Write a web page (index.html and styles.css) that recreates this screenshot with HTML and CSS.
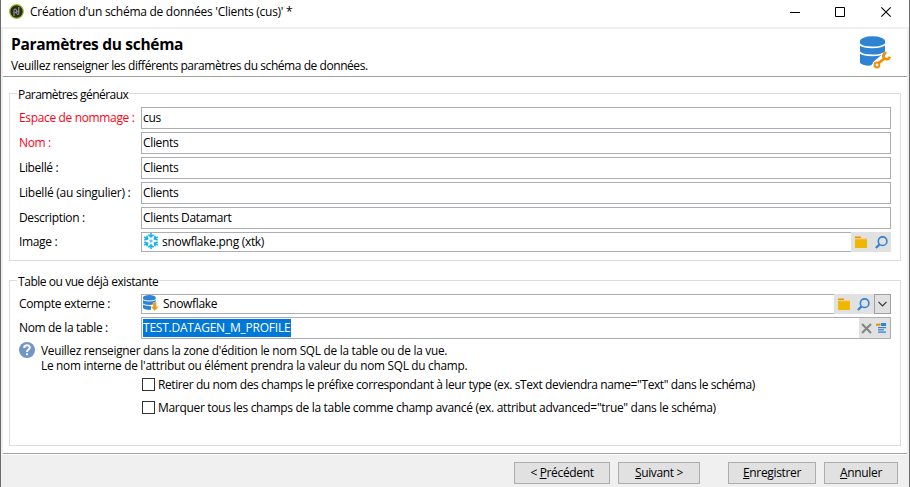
FILE: index.html
```html
<!DOCTYPE html>
<html lang="fr">
<head>
<meta charset="utf-8">
<title>Création d'un schéma de données</title>
<link rel="stylesheet" href="styles.css">
</head>
<body>
<svg class="defs" width="0" height="0">
  <symbol id="folder" viewBox="0 0 12 12"><path d="M0 .5h6v2H0z" fill="#f29100"/><path d="M0 2h12v1H0z" fill="#f7cf8a"/><path d="M0 3.2h12V12H0z" fill="#efb700"/></symbol>
  <symbol id="lens" viewBox="0 0 13 13"><circle cx="7.600" cy="5.200" r="4.300" fill="none" stroke="#2f83d3" stroke-width="1.600"/><path d="M4.700 8.300L.9 12" stroke="#2f83d3" stroke-width="2.200"/></symbol>
</svg>
<div class="window">
  <header class="titlebar">
    <svg class="app-icon" width="15" height="15" viewBox="0 0 15 15"><circle cx="7.5" cy="7.5" r="6.8" fill="#292b20" stroke="#a3bd2c" stroke-width="1.2"/><path d="M5 12V6.300q0-1.300 1.200-1.300t1.200 1.300v1.200q0 1.300-1.600 1.300M9.800 3v6.500q0 1-1 1t-1-1V8q0-1 2-1" fill="none" stroke="#aaa99a" stroke-width="1"/></svg>
    <span class="caption">Création d'un schéma de données 'Clients (cus)' *</span>
    <svg class="controls" width="102" height="12" viewBox="0 0 102 12" fill="none" stroke="#000"><path d="M0 6.500h10M45.500 1.500h9v9h-9z"/><path d="M91.300 1.300l9.400 9.400M100.700 1.300l-9.400 9.400" stroke-width="1.1"/></svg>
  </header>
  <main class="page">
    <section class="heading">
      <div>
        <h1>Paramètres du schéma</h1>
        <p>Veuillez renseigner les différents paramètres du schéma de données.</p>
      </div>
      <svg width="31" height="33" viewBox="0 0 31 33"><path d="M0 4.500V27c2 2 7 3 11 2.500L14 26l6-5 5-1V4.500z" fill="#2f83d3"/><ellipse cx="12.500" cy="5" rx="12.500" ry="4.700" fill="#2f83d3"/><path d="M-.5 8c3 4.500 22 4.500 26 0M-.5 16c3 4.500 22 4.500 26 0" fill="none" stroke="#fff" stroke-width="1.700"/><path d="M15.500 30l10-8.500" stroke="#fff" stroke-width="9"/><circle cx="17" cy="29" r="2.400" fill="none" stroke="#ef9000" stroke-width="2"/><path d="M18.500 27.200l6-4.700" stroke="#ef9000" stroke-width="2.800"/><path d="M26.500 16.800c-3 .4-4 3-2.500 5s4.500 2.200 6-1" fill="none" stroke="#ef9000" stroke-width="2.600"/></svg>
    </section>
    <section class="group general">
      <h2>Paramètres généraux</h2>
      <div class="row"><label class="required">Espace de nommage :</label><div class="field">cus</div></div>
      <div class="row"><label class="required">Nom :</label><div class="field">Clients</div></div>
      <div class="row"><label>Libellé :</label><div class="field">Clients</div></div>
      <div class="row"><label class="singular">Libellé (au singulier) :</label><div class="field">Clients</div></div>
      <div class="row"><label>Description :</label><div class="field">Clients Datamart</div></div>
      <div class="row short"><label>Image :</label>
        <div class="combo"><div class="field">
          <svg width="16" height="16" viewBox="-8 -8 16 16" fill="none" stroke="#18b2ec" stroke-width="1.600"><path d="M-1.300 0L0-1.300 1.300 0 0 1.300z" stroke-width="1"/><g id="arm"><path d="M0-8v4.600M-2.600-6.300L0-4l2.600-2.300"/></g><use href="#arm" transform="rotate(60)"/><use href="#arm" transform="rotate(120)"/><use href="#arm" transform="rotate(180)"/><use href="#arm" transform="rotate(240)"/><use href="#arm" transform="rotate(300)"/></svg>
          <span class="image-name">snowflake.png (xtk)</span></div>
          <div class="tools"><svg width="12" height="12"><use href="#folder"/></svg><svg width="13" height="13"><use href="#lens"/></svg></div>
        </div>
      </div>
    </section>
    <section class="group existing">
      <h2>Table ou vue déjà existante</h2>
      <div class="row short account"><label>Compte externe :</label>
        <div class="combo"><div class="field">
          <svg width="16" height="16" viewBox="0 0 16 16"><path d="M0 2.500V13c2 2 6 2 8 1.800V10h4.600V2.500z" fill="#2f83d3"/><ellipse cx="6.300" cy="2.500" rx="6.300" ry="2.500" fill="#2f83d3"/><path d="M0 4.600c2 1.800 10.600 1.800 12.600 0M0 9c2 1.800 8 1.800 11 .8" fill="none" stroke="#fff"/><path d="M10 7.500h3.400v4h2.400L11.700 16l-4.100-4.500H10z" fill="#f09a16" stroke="#fff" stroke-width=".3"/></svg>
          <span>Snowflake</span></div>
          <div class="tools"><svg width="12" height="12"><use href="#folder"/></svg><svg width="13" height="13"><use href="#lens"/></svg></div>
          <div class="drop"><svg width="9" height="6" viewBox="0 0 9 6"><path d="M.5.8l4 4 4-4" fill="none" stroke="#333" stroke-width="1.200"/></svg></div>
        </div>
      </div>
      <div class="row table"><label>Nom de la table :</label>
        <div class="field"><span class="selected">TEST.DATAGEN_M_PROFILE</span>
          <div class="tools inner"><svg width="11" height="11" viewBox="0 0 11 11"><path d="M1 1l9 9M10 1l-9 9" stroke="#858585" stroke-width="2.100"/></svg><svg width="11" height="10" viewBox="0 0 11 10"><path d="M0 .7h3V0l2 1.500L3 3.500v-.8H0z" fill="#f29100"/><path d="M5 0h5v3H5zM2 4h8v1.300H2zM2 6.200h6v1.300H2zM2 8.400h8v1.300H2z" fill="#2f83d3"/></svg></div>
        </div>
      </div>
      <div class="note">
        <svg width="16" height="16" viewBox="0 0 16 16"><circle cx="8" cy="8" r="8" fill="#7295c8"/><path d="M5.200 6c0-3.600 5.600-3.300 5.600-.4C10.800 7.600 8 7.500 8 10" fill="none" stroke="#fff" stroke-width="2"/><path d="M7 11.200h2.100v2H7z" fill="#fff"/></svg>
        <div class="note-lines"><p>Veuillez renseigner dans la zone d'édition le nom SQL de la table ou de la vue.</p><p>Le nom interne de l'attribut ou élément prendra la valeur du nom SQL du champ.</p></div>
      </div>
      <div class="check"><i></i><span class="remove">Retirer du nom des champs le préfixe correspondant à leur type (ex. sText deviendra name="Text" dans le schéma)</span></div>
      <div class="check"><i></i><span class="mark">Marquer tous les champs de la table comme champ avancé (ex. attribut advanced="true" dans le schéma)</span></div>
    </section>
  </main>
  <footer class="actions">
    <button class="previous">&lt; <u>P</u>récédent</button>
    <button class="next"><u>S</u>uivant &gt;</button>
    <button class="save"><u>E</u>nregistrer</button>
    <button class="cancel"><u>A</u>nnuler</button>
  </footer>
</div>
</body>
</html>
```
FILE: styles.css
```css
* { box-sizing: border-box; margin: 0; padding: 0; }
body { width: 910px; height: 487px; overflow: hidden; background: #f0f0f0; color: #000;
  font: 12px/15px "Open Sans", "Noto Sans", sans-serif; letter-spacing: -0.35px; white-space: nowrap; }
svg { display: block; flex: none; }
.defs { position: absolute; }
.window { height: 487px; border: solid #6b6b6b; border-width: 0 1px; display: flex; flex-direction: column; }
.titlebar { height: 27px; background: #fff; display: flex; align-items: center; padding: 0 17px 4px 8px; }
.caption { margin-left: 6px; flex: 1; letter-spacing: -0.27px; }
.page { margin: 2px 2px 0; height: 426px; background: #fff; border-bottom: 1px solid #fff; box-shadow: inset 0 -1px #a0a0a0; }
.heading { height: 48px; border-bottom: 1px solid #a0a0a0; display: flex; justify-content: space-between; padding: 7px 16px 0 8px; }
h1 { font-size: 15.5px; line-height: 18px; letter-spacing: -0.3px; margin-top: -1px; }
.heading p { margin-top: 5px; letter-spacing: -0.44px; }
.group { margin: 16px 6px 0; border: 1px solid #dcdcdc; padding: 0 9px; }
.general { height: 168px; }
.existing { height: 166px; margin-top: 19px; }
h2 { font: inherit; letter-spacing: -0.55px; width: max-content; background: #fff; margin: -7px 0 5px -2px; padding: 0 1px; height: 15px; }
.row { display: grid; grid-template-columns: 122px 750px; height: 22px; margin-bottom: 3px; }
.row label { line-height: 21px; }
.row .singular { letter-spacing: -0.25px; }
.row .required { color: #ff0014; }
.field { border: 1px solid #abadb3; background: #fff; padding-left: 1px; line-height: 19px; display: flex; min-width: 0; }
.short { height: 20px; }
.row.short label { line-height: 19px; }
.combo { display: flex; }
.combo .field { flex: 1; line-height: 17px; border-right: 0; }
.combo .field span { margin-left: 4px; }
.combo .field .image-name { margin-left: 3px; letter-spacing: -0.3px; }
.tools { width: 40px; background: #e1e1e1; display: flex; align-items: center; padding-left: 4px; gap: 8px; }
.account .tools { gap: 7px; }
.drop { width: 17px; border: 1px solid #a0a0a0; background: #e1e1e1; display: grid; place-items: center; }
.existing h2 { letter-spacing: -0.45px; }
.selected { background: #0078d7; color: #fff; height: 18px; line-height: 17px; margin-top: 1px; width: 148px; letter-spacing: -0.22px; }
.inner { width: 31px; margin-left: auto; padding-left: 2px; gap: 4px; }
.note { display: flex; gap: 6px; height: 35px; }
.note-lines { margin-top: 1px; font-size: 11.8px; letter-spacing: -0.25px; }
.check { display: flex; align-items: center; height: 15px; margin: 0 0 8px 123px; gap: 3px; }
.check i { width: 13px; height: 13px; border: 1px solid #333; background: #fff; }
.remove { letter-spacing: -0.4px; }
.mark { letter-spacing: -0.32px; }
.actions { padding: 7px 11px 0 0; display: flex; justify-content: flex-end; }
button { height: 22px; border: 1px solid #adadad; background: #e1e1e1; color: #000; font: inherit; letter-spacing: inherit; line-height: 18px; }
u { text-underline-offset: 1px; text-decoration-thickness: 1px; text-decoration-skip-ink: none; }
.previous { width: 96px; margin-right: 8px; }
.next { width: 82px; margin-right: 28px; }
.save { width: 88px; margin-right: 8px; }
.cancel { width: 74px; }
```
